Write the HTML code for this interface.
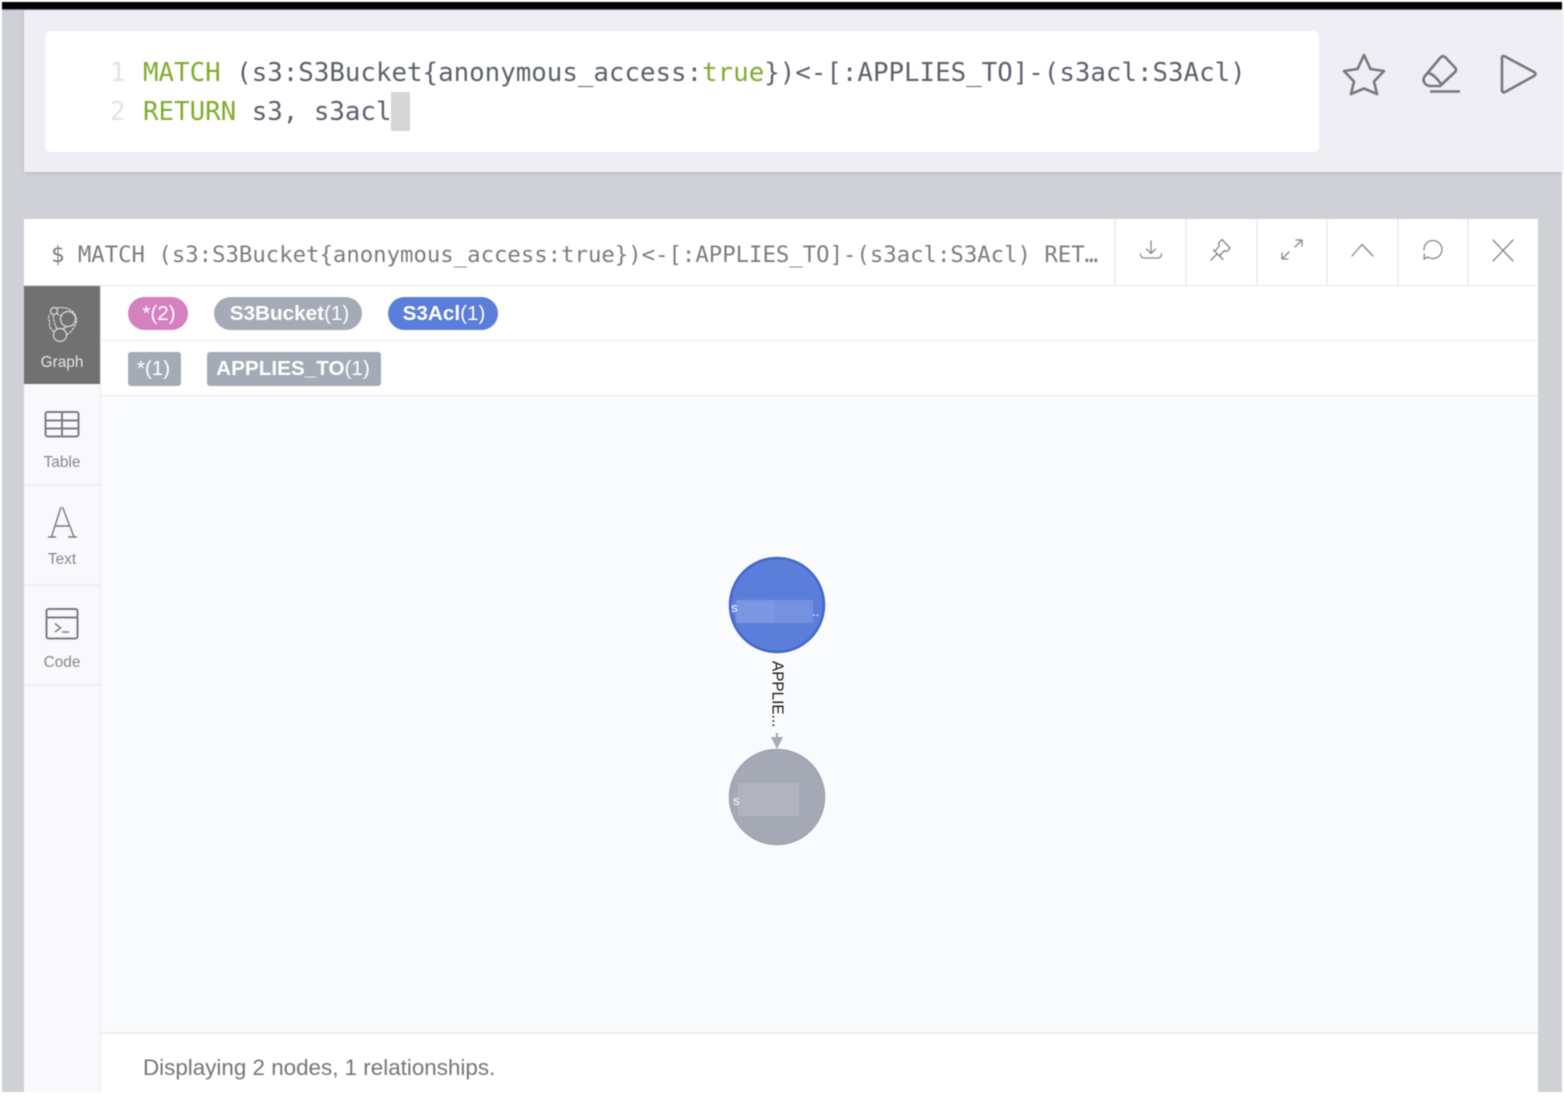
<!DOCTYPE html>
<html><head><meta charset="utf-8">
<style>
html,body{margin:0;padding:0;background:#fff;width:1564px;height:1096px;overflow:hidden}
#p{position:absolute;left:0;top:0;width:1564px;height:1096px;overflow:hidden;font-family:"Liberation Sans",sans-serif;filter:blur(.55px)}
.a{position:absolute;white-space:pre}
.m{font-family:"DejaVu Sans Mono","Liberation Mono",monospace}
.code{font-size:25.8px;line-height:40px;color:#5c616d}
.k{color:#80ad2c}
.hb{top:219px;width:2px;height:66px;background:#eeeff4}
.lb{left:24px;width:76px;text-align:center;font-size:15.4px;color:#85878c}
.pill{color:#fff;font-size:20.7px;line-height:33px;height:33px;text-align:center}
.pill span{position:relative}
</style></head><body><div id="p">
<div class="a" style="left:2px;top:10px;width:1560px;height:1082px;background:#cfd1d6"></div>
<div class="a" style="left:2px;top:2px;width:1560px;height:7px;background:#000"></div>
<div class="a" style="left:2px;top:9px;width:1560px;height:1px;background:#77787b"></div>

<div class="a" style="left:24px;top:10px;width:1538px;height:162px;background:#eeeef4;box-shadow:0 1px 4px rgba(0,0,0,.12)"></div>
<div class="a" style="left:45px;top:31px;width:1274px;height:121px;background:#fff;border-radius:6px"></div>
<div class="a" style="left:391px;top:92px;width:19px;height:39px;background:#d6d6d6"></div>
<div class="a m code" style="left:110px;top:53px;color:#e2e3e5">1</div>
<div class="a m code" style="left:110px;top:92px;color:#e2e3e5">2</div>
<div class="a m code" style="left:143px;top:53px"><span class="k">MATCH</span> (s3:S3Bucket{anonymous_access:<span class="k">true</span>})&lt;-[:APPLIES_TO]-(s3acl:S3Acl)</div>
<div class="a m code" style="left:143px;top:92px"><span class="k">RETURN</span> s3, s3acl</div>

<svg class="a" style="left:1330px;top:40px" width="210" height="70" viewBox="0 0 210 70" fill="none" stroke="#76787d" stroke-width="2.6" stroke-linejoin="round" stroke-linecap="round">
<path d="M34 15 L40.500 29 L54 31 L44 41.500 L47 54 L34 48.500 L21 54 L24 41.500 L14 31 L27.500 29Z"/>
<path d="M110.500 17.500 Q113 15 115.500 17.500 L125 27.500 Q127 30 125 32 L110 46 H100 Q97 46 95 43.500 Q92 40 95 36Z M98.500 33 Q105 35 111 44"/>
<path d="M100 51.500 H130" stroke-linecap="butt"/>
<path d="M172 18 Q172 15 175 16.500 L204 32 Q207 34 204 36 L175 52 Q172 53 172 50Z"/>
</svg>

<div class="a" style="left:24px;top:219px;width:1514px;height:873px;background:#fff"></div>
<div class="a m" style="left:51px;top:240px;font-size:22.3px;line-height:30px;color:#7a7c81">$ MATCH (s3:S3Bucket{anonymous_access:true})&lt;-[:APPLIES_TO]-(s3acl:S3Acl) RET…</div>
<div class="a" style="left:24px;top:285px;width:1514px;height:1px;background:#e8e9f0"></div>
<div class="a hb" style="left:1114px"></div><div class="a hb" style="left:1185px"></div><div class="a hb" style="left:1256px"></div><div class="a hb" style="left:1326px"></div><div class="a hb" style="left:1397px"></div><div class="a hb" style="left:1467px"></div>
<svg class="a" style="left:1130px;top:230px" width="400" height="42" viewBox="0 0 400 42" fill="none" stroke="#85878c" stroke-width="1.3" stroke-linecap="round" stroke-linejoin="round">
<path d="M21 11 V23 M16.500 19 L21 23.500 L25.500 19 M10.500 24 Q11 28 14 28 H28 Q31 28 31.500 24"/>
<path d="M81 30 L87 24 M83.500 20 L93 29.500 M85.500 20.500 L89.500 15.500 L88.500 13 L92 9.500 L100 18 L97 21.500 L94.500 20.500 L90 25 L91 27.500"/>
<path d="M152 29 L159 22 M152 23 V29 H158 M165 17 L172 10 M166 10 H172 V16"/>
<path d="M222 26 L232 14.500 L243 26"/>
<path d="M294 20 A9 9 0 1 1 298 27 L294 29 L294.500 24"/>
<path d="M363 10 L383 31 M383 10 L363 31"/>
</svg>

<div class="a" style="left:24px;top:286px;width:76px;height:806px;background:#f9f9fc"></div>
<div class="a" style="left:100px;top:286px;width:1px;height:806px;background:#e9eaf1"></div>
<div class="a" style="left:24px;top:286px;width:76px;height:98px;background:#717172"></div>
<div class="a" style="left:24px;top:484px;width:76px;height:2px;background:#eef0f5"></div>
<div class="a" style="left:24px;top:584px;width:76px;height:2px;background:#eef0f5"></div>
<div class="a" style="left:24px;top:684px;width:76px;height:2px;background:#eef0f5"></div>
<svg class="a" style="left:30px;top:295px" width="64" height="60" viewBox="0 0 64 60" fill="none" stroke="#dcdcdc" stroke-width="1.2">
<circle cx="38" cy="24" r="7.500"/><circle cx="30" cy="40" r="6.500"/><circle cx="24" cy="16" r="3.500"/>
<path d="M27 13 Q38 11 44 18 Q49 26 44 32 Q41 38 36 40 M24 37 Q18 32 20 27 Q17 22 20 19 M27 18 Q30 22 32 20 M23 20 Q24 28 27 34 M33 33 Q36 33 37 32" stroke-dasharray="3 .8"/>
</svg>
<div class="a lb" style="top:354px;color:#e4e4e4">Graph</div>
<svg class="a" style="left:40px;top:405px" width="44" height="40" viewBox="0 0 44 40" fill="none" stroke="#7b7d82" stroke-width="2">
<rect x="5.500" y="7" width="33" height="24.500" rx="2"/><path d="M5.500 15.500 H38.500 M5.500 23.500 H38.500 M22 7 V31.500"/></svg>
<div class="a lb" style="top:454px">Table</div>
<svg class="a" style="left:24px;top:490px" width="76" height="60" viewBox="0 0 76 60" fill="none" stroke="#77797e" stroke-width="1.400">
<path d="M38.500 17 L50 47 M37 17 L27.500 47 M31 36 H46 M24 47 H32 M44 47 H53"/></svg>
<div class="a lb" style="top:551px">Text</div>
<svg class="a" style="left:40px;top:603px" width="44" height="42" viewBox="0 0 44 42" fill="none" stroke="#7b7d82" stroke-width="2">
<rect x="6.500" y="6" width="31" height="29.500" rx="2"/><path d="M6.500 14.500 H37.500"/><path d="M15 20.500 L20.500 25 L15 29 M22 29 H29" stroke-width="1.500"/></svg>
<div class="a lb" style="top:654px">Code</div>

<div class="a" style="left:101px;top:340px;width:1437px;height:1px;background:#e8e9f0"></div>
<div class="a" style="left:101px;top:395px;width:1437px;height:1px;background:#e8e9f0"></div>
<div class="a pill" style="left:128px;top:297px;width:60px;background:#d580bf;border-radius:17px"><span style="left:1px">*(2)</span></div>
<div class="a pill" style="left:214px;top:297px;width:148px;background:#a5abb6;border-radius:17px"><span style="left:1.500px"><b>S3Bucket</b>(1)</span></div>
<div class="a pill" style="left:388px;top:297px;width:110px;background:#5a7ed9;border-radius:17px"><span style="left:1px"><b>S3Acl</b>(1)</span></div>
<div class="a pill" style="left:128px;top:352px;width:53px;height:34px;line-height:34px;background:#a5abb6;border-radius:3px"><span style="left:-1px">*(1)</span></div>
<div class="a pill" style="left:207px;top:352px;width:174px;height:34px;line-height:34px;background:#a5abb6;border-radius:3px"><span style="left:-1px"><b>APPLIES_TO</b>(1)</span></div>

<div class="a" style="left:101px;top:396px;width:1437px;height:636px;background:#f9fbfd"></div>
<div class="a" style="left:101px;top:1032px;width:1437px;height:2px;background:#eceef4"></div>
<svg class="a" style="left:700px;top:540px" width="150" height="320" viewBox="0 0 150 320">
<circle cx="77" cy="65" r="47" fill="#5a7ed9" stroke="#4467c9" stroke-width="2.500"/>
<rect x="36" y="60" width="39" height="23" fill="#7c97e2"/><rect x="75" y="60" width="38" height="23" fill="#7591e0"/>
<circle cx="77" cy="257" r="47.500" fill="#a5a9b5" stroke="#9fa3af" stroke-width="1.500"/>
<rect x="38" y="243" width="61" height="33" fill="#b1b4bf"/>
<path d="M77 193 V199" stroke="#a5abb6" stroke-width="2"/>
<path d="M71 197 H83 L77 209Z" fill="#a5abb6"/>
<text x="31" y="72" font-family="Liberation Sans" font-size="13" fill="#fff">s</text>
<text x="112" y="76" font-family="Liberation Sans" font-size="13" fill="#fff">..</text>
<text x="33" y="265" font-family="Liberation Sans" font-size="13" fill="#fff">s</text>
<text transform="translate(72.500 121) rotate(90)" font-family="Liberation Sans" font-size="15.300" fill="#111">APPLIE...</text>
</svg>

<div class="a" style="left:143px;top:1053px;font-size:22.4px;line-height:30px;color:#737579">Displaying 2 nodes, 1 relationships.</div>
</div></body></html>
